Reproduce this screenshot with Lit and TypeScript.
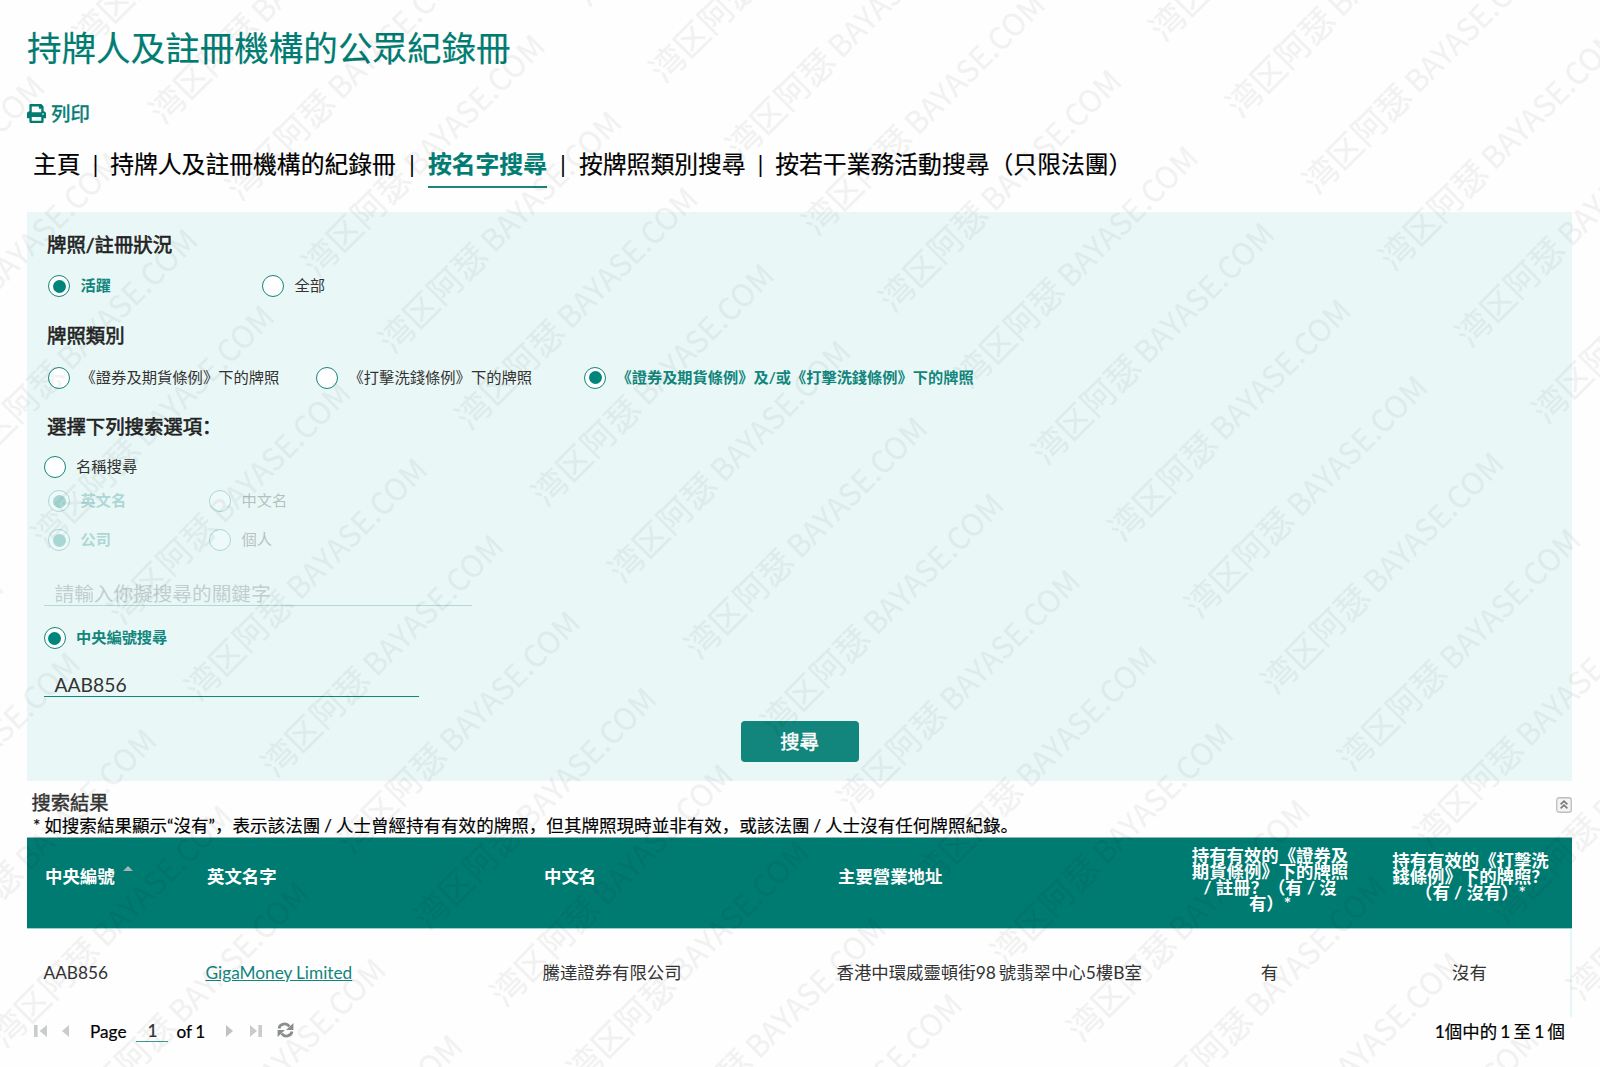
import { LitElement, html, css, svg } from "lit";
import { customElement, property } from "lit/decorators.js";

const FONT = css`Lato, "Noto Sans CJK SC", "Noto Sans CJK TC", sans-serif`;

@customElement("radio-option")
class RadioOption extends LitElement {
  @property({ type: Boolean }) checked = false;
  @property({ type: Boolean }) disabled = false;

  static styles = css`
    :host { display: flex; align-items: center; height: 22px; }
    .option { display: flex; align-items: center; gap: 10.5px; font: 15.3px/22px ${FONT}; color: #333; white-space: nowrap; }
    .checked { color: #12857c; font-weight: 700; font-size: 15.22px; }
    .disabled { opacity: 0.28; }
    .disabled .ring { background: rgba(255, 255, 255, 0.9); }
    .ring { box-sizing: border-box; width: 22px; height: 22px; border: 1.4px solid #12857c; border-radius: 50%; background: #fff; display: grid; place-items: center; flex: none; }
    .dot { width: 13px; height: 13px; border-radius: 50%; background: #00857c; }
    .label { padding-bottom: 2px; }
  `;

  render() {
    return html`<div class="option ${this.checked ? "checked" : ""} ${this.disabled ? "disabled" : ""}">
      <span class="ring">${this.checked ? html`<span class="dot"></span>` : null}</span>
      <span class="label"><slot></slot></span>
    </div>`;
  }
}

@customElement("water-mark")
class WaterMark extends LitElement {
  static styles = css`
    :host { position: absolute; inset: 0; overflow: hidden; pointer-events: none; }
    .layer { display: block; width: 1600px; height: 1067px; }
    .mark { font: 34.2px "Noto Sans CJK SC", sans-serif; fill: #000; stroke: #000; stroke-width: 0.2; opacity: 0.046; }
    .latin { font-size: 30.5px; }
  `;

  render() {
    const marks = [];
    for (let row = 0; row < 19; row++) {
      for (let col = -3; col < 4; col++) {
        const u = 27.2 + col * 382.9;
        const v = -11.2 + row * 108.15;
        const x = (u + v) / Math.SQRT2;
        const y = (v - u) / Math.SQRT2;
        if (x < -260 || x > 1640 || y < -40 || y > 1340) continue;
        marks.push(svg`<text class="mark" x=${u} y=${v}>湾区阿瑟<tspan class="latin" dx="-1" dy="-0.6"> BAYASE.COM</tspan></text>`);
      }
    }
    return html`<svg class="layer" viewBox="0 0 1600 1067" aria-hidden="true">
      <g transform="rotate(-45)">${marks}</g>
    </svg>`;
  }
}

const NAV = ["主頁", "持牌人及註冊機構的紀錄冊", "按名字搜尋", "按牌照類別搜尋", "按若干業務活動搜尋（只限法團）"];

@customElement("app-root")
class AppRoot extends LitElement {
  static styles = css`
    :host { display: block; position: relative; width: 1600px; height: 1067px; overflow: hidden; background: #fefefe; font-family: ${FONT}; color: #333; }
    .page { padding: 0 28px 0 27px; }
    .title { margin: 0; height: 96px; font-size: 34.55px; line-height: 96px; font-weight: 400; color: #007c72; -webkit-text-stroke: 0.2px currentColor; }
    .print { display: flex; align-items: center; gap: 5px; height: 35px; color: #007c72; font-size: 19.4px; -webkit-text-stroke: 0.5px currentColor; }
    .print-icon { width: 19px; height: 19px; fill: currentColor; stroke: none; }
    .print-label { padding-bottom: 2px; }
    .nav { display: flex; height: 68px; padding: 13px 0 0 6px; font-size: 23.82px; line-height: 40px; color: #000; }
    .nav-item { height: 42px; white-space: nowrap; -webkit-text-stroke: 0.2px currentColor; }
    .nav-item.active { color: #007c72; font-weight: 700; border-bottom: 2px solid #1c867d; }
    .sep { width: 29.5px; text-align: center; }
    .sep.wide { width: 32px; }

    .panel { box-sizing: border-box; height: 569px; padding-top: 18px; background: #e9f8f7; display: flex; flex-direction: column; }
    .heading { box-sizing: border-box; margin: 0 0 0 20px; padding-bottom: 4px; font-size: 19.4px; font-weight: 400; color: #222; -webkit-text-stroke: 0.6px currentColor; display: flex; align-items: center; }
    .h-status { height: 30px; }
    .h-type { height: 48px; }
    .h-options { height: 44px; margin-top: 10px; }
    .row { display: grid; align-items: center; padding-left: 21px; }
    .outer { padding-left: 16.5px; }
    .r-status { height: 52px; grid-template-columns: 214px 1fr; }
    .r-type { height: 35px; grid-template-columns: 268px 268px 1fr; }
    .r-name { height: 36px; }
    .r-lang { height: 32px; grid-template-columns: 161px 1fr; }
    .r-kind { height: 46px; grid-template-columns: 161px 1fr; }
    .r-number { height: 64px; }
    .field { box-sizing: border-box; margin-left: 17px; padding-left: 10.5px; line-height: 24px; }
    .f-name { width: 428px; height: 43px; padding-top: 19px; font-size: 19.65px; color: #c0cfce; border-bottom: 1px solid #b3d9d6; }
    .f-number { width: 375px; height: 27px; padding-top: 3px; font-size: 19.3px; color: #333; border-bottom: 1.5px solid #12857c; }
    .search { align-self: center; margin-top: 24px; width: 118px; height: 41px; border: 0; border-radius: 4px; background: #12857c; color: #fff; font: 400 19.3px/41px ${FONT}; -webkit-text-stroke: 0.4px currentColor; padding: 0; }

    .results-head { display: flex; justify-content: space-between; padding: 7px 0 0 4.5px; height: 30px; align-items: center; }
    .results-title { font-size: 19.3px; line-height: 30px; -webkit-text-stroke: 0.4px currentColor; }
    .toggle { width: 16px; height: 16px; margin-top: 4px; }
    .note { height: 19px; padding-left: 6px; font-size: 17.56px; line-height: 16px; word-spacing: -0.7px; color: #000; white-space: nowrap; -webkit-text-stroke: 0.15px currentColor; }

    .cols { display: grid; grid-template-columns: 162px 337px 294px 350px 200px 1fr; align-items: center; }
    .thead { box-sizing: border-box; height: 92px; background: #007b72; border-top: 1px solid #8fb5b2; border-bottom: 1px solid #9fd2ce; color: #fff; font-size: 17.4px; font-weight: 700; line-height: 16.2px; }
    .th { padding: 0 0 11px 18px; white-space: nowrap; }
    .th.sorted { display: flex; align-items: center; gap: 8px; }
    .th.center { padding: 0 0 6px; text-align: center; }
    .th.low { padding-bottom: 12px; padding-right: 1px; }
    .sort { border: 5px solid transparent; border-top: 0; border-bottom: 5px solid #a9b5b3; margin-bottom: 18px; }
    .tbody { box-sizing: border-box; height: 88px; padding-bottom: 3px; border-right: 2px solid #e4f6f5; font-size: 17.4px; word-spacing: -1.5px; }
    .td { padding-left: 16.5px; white-space: nowrap; }
    .td.center { padding: 0 1px 0 0; text-align: center; }
    .td.code { font-size: 17.25px; padding-top: 1px; word-spacing: -0.5px; }
    .link { color: #12857c; text-decoration: underline; }

    .pager { display: flex; justify-content: space-between; align-items: center; height: 29px; padding: 0 7px; font-size: 17.4px; color: #000; line-height: 24px; }
    .count { word-spacing: -1.2px; -webkit-text-stroke: 0.2px currentColor; }
    .controls { display: flex; align-items: center; height: 30px; font-size: 17.2px; -webkit-text-stroke: 0.2px currentColor; }
    .ico { display: block; height: 16px; overflow: visible; margin-bottom: 1px; -webkit-text-stroke: 0; }
    .ico.first { width: 13px; margin-right: 15px; }
    .ico.prev { width: 7px; margin-right: 21px; }
    .page-no { width: 32px; text-align: center; border-bottom: 1.5px solid #3c9a92; line-height: 20px; height: 20px; margin: 0 8px 0 10px; color: #333; }
    .of { word-spacing: -1px; }
    .ico.next { width: 7px; margin-left: 20.5px; margin-right: 17px; }
    .ico.last { width: 12px; margin-right: 15px; }
    .ico.refresh { width: 17px; margin-bottom: 3px; }
  `;

  render() {
    return html`
      <main class="page">
        <h1 class="title">持牌人及註冊機構的公眾紀錄冊</h1>
        <div class="print">
          <svg class="print-icon" viewBox="0 0 512 512"><path d="M448 192V77.25c0-8.49-3.37-16.62-9.37-22.63L393.37 9.37c-6-6-14.14-9.37-22.63-9.37H96C78.33 0 64 14.33 64 32v160c-35.35 0-64 28.65-64 64v112c0 8.84 7.16 16 16 16h48v96c0 17.67 14.33 32 32 32h320c17.67 0 32-14.33 32-32v-96h48c8.84 0 16-7.16 16-16V256c0-35.35-28.65-64-64-64zm-64 256H128v-96h256v96zm0-224H128V64h192v48c0 8.84 7.16 16 16 16h48v96zm48 72c-13.25 0-24-10.75-24-24 0-13.26 10.75-24 24-24s24 10.74 24 24c0 13.25-10.75 24-24 24z"/></svg>
          <span class="print-label">列印</span>
        </div>
        <nav class="nav">
          ${NAV.map((label, i) => html`${i ? html`<span class="sep ${i === 2 || i === 3 ? "wide" : ""}">|</span>` : null}<span class="nav-item ${i === 2 ? "active" : ""}">${label}</span>`)}
        </nav>

        <section class="panel">
          <h2 class="heading h-status">牌照/註冊狀況</h2>
          <div class="row r-status">
            <radio-option checked>活躍</radio-option>
            <radio-option>全部</radio-option>
          </div>
          <h2 class="heading h-type">牌照類別</h2>
          <div class="row r-type">
            <radio-option>《證券及期貨條例》下的牌照</radio-option>
            <radio-option>《打擊洗錢條例》下的牌照</radio-option>
            <radio-option checked>《證券及期貨條例》及/或《打擊洗錢條例》下的牌照</radio-option>
          </div>
          <h2 class="heading h-options">選擇下列搜索選項：</h2>
          <div class="row outer r-name"><radio-option>名稱搜尋</radio-option></div>
          <div class="row r-lang">
            <radio-option checked disabled>英文名</radio-option>
            <radio-option disabled>中文名</radio-option>
          </div>
          <div class="row r-kind">
            <radio-option checked disabled>公司</radio-option>
            <radio-option disabled>個人</radio-option>
          </div>
          <div class="field f-name">請輸入你擬搜尋的關鍵字</div>
          <div class="row outer r-number"><radio-option checked>中央編號搜尋</radio-option></div>
          <div class="field f-number">AAB856</div>
          <button class="search">搜尋</button>
        </section>

        <div class="results-head">
          <span class="results-title">搜索結果</span>
          <svg class="toggle" viewBox="0 0 16 16"><rect x=".75" y=".75" width="14.5" height="14.5" rx="2.5" fill="#f4f4f4" stroke="#bdbdbd" stroke-width="1.3"/><path d="M4.6 7.4 8 4.2l3.4 3.2M4.6 11.4 8 8.2l3.4 3.2" fill="none" stroke="#777" stroke-width="1.6"/></svg>
        </div>
        <div class="note">* 如搜索結果顯示“沒有”，表示該法團 / 人士曾經持有有效的牌照，但其牌照現時並非有效，或該法團 / 人士沒有任何牌照紀錄。</div>

        <div class="cols thead">
          <div class="th sorted">中央編號<span class="sort"></span></div>
          <div class="th">英文名字</div>
          <div class="th">中文名</div>
          <div class="th">主要營業地址</div>
          <div class="th center">持有有效的《證券及<br>期貨條例》下的牌照<br>/ 註冊？（有 / 沒<br>有）*</div>
          <div class="th center low">持有有效的《打擊洗<br>錢條例》下的牌照？<br>（有 / 沒有）*</div>
        </div>
        <div class="cols tbody">
          <div class="td code">AAB856</div>
          <div class="td code"><span class="link">GigaMoney Limited</span></div>
          <div class="td">騰達證券有限公司</div>
          <div class="td">香港中環威靈頓街98 號翡翠中心5樓B室</div>
          <div class="td center">有</div>
          <div class="td center">沒有</div>
        </div>

        <div class="pager">
          <div class="controls">
            <svg class="ico first" viewBox="0 0 13 16"><path d="M0 2h3.6v12H0zM13 2v12L5.6 8z" fill="#c9cccc"/></svg>
            <svg class="ico prev" viewBox="0 0 7 16"><path d="M7 2v12L0 8z" fill="#c9cccc"/></svg>
            <span>Page</span>
            <span class="page-no">1</span>
            <span class="of">of 1</span>
            <svg class="ico next" viewBox="0 0 7 16"><path d="M0 2v12l7-6z" fill="#c0c3c3"/></svg>
            <svg class="ico last" viewBox="0 0 12 16"><path d="M0 2v12l7-6zM8.4 2H12v12H8.4z" fill="#c9cccc"/></svg>
            <svg class="ico refresh" viewBox="0 0 17 16"><path d="M2 6.4C2.8 1.6 9.2.4 12.4 4.4M15 9.6C14.2 14.4 7.8 15.6 4.6 11.6" fill="none" stroke="#8b8e8e" stroke-width="2.8"/><path d="M16.4 1v7H9zM.6 15V8H8z" fill="#8b8e8e"/></svg>
          </div>
          <span class="count">1個中的 1 至 1 個</span>
        </div>
      </main>
      <water-mark></water-mark>
    `;
  }
}
